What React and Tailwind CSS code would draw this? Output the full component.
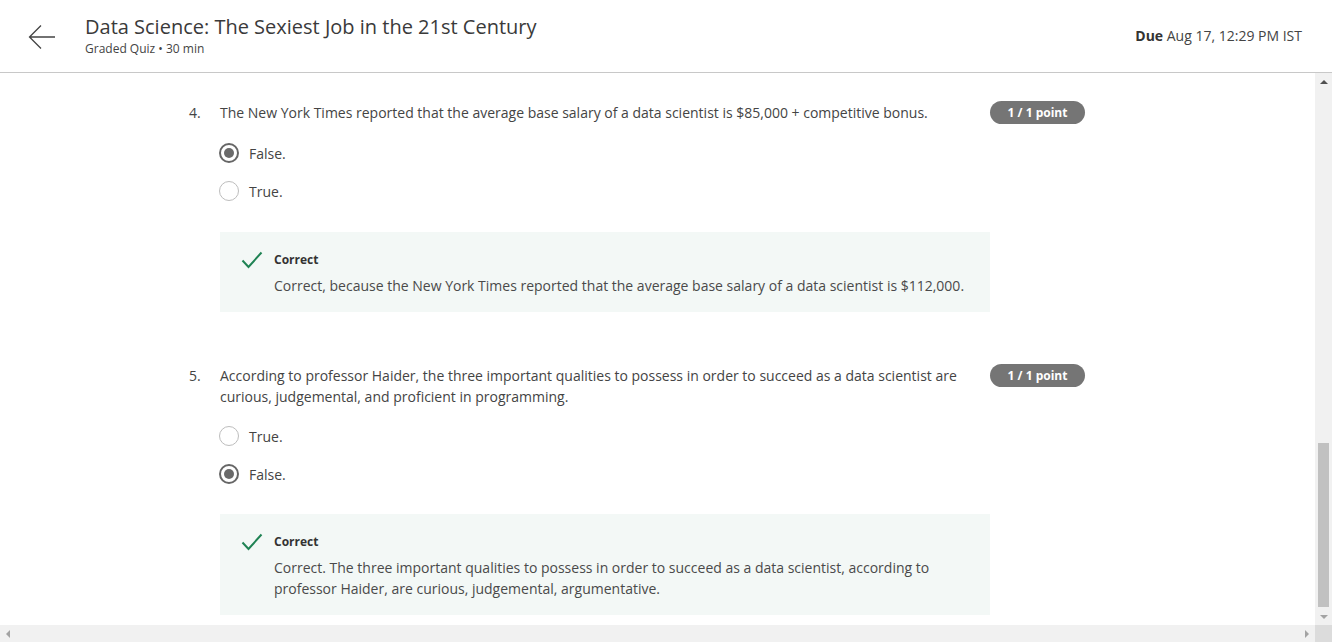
import React from 'react';

const font = "font-['Open_Sans','Liberation_Sans',sans-serif]";

function Radio({ checked }) {
  return checked ? (
    <div className="w-[20px] h-[20px] rounded-full border-2 border-[#666] flex items-center justify-center">
      <div className="w-[10px] h-[10px] rounded-full bg-[#6a6a6a]" />
    </div>
  ) : (
    <div className="w-[20px] h-[20px] rounded-full border-[1.5px] border-[#bdbdbd]" />
  );
}

function Option({ label, checked }) {
  return (
    <div className="h-[38px] flex items-center gap-[10px]">
      <Radio checked={checked} />
      <span className="text-[14px] text-[#444]">{label}</span>
    </div>
  );
}

function Feedback({ children }) {
  return (
    <div className="w-[770px] bg-[#f3f8f6] pl-[21px] pr-6 pt-[19px] pb-[16px] flex gap-[11px]">
      <svg width="22" height="18" viewBox="0 0 22 18" className="shrink-0">
        <path d="M1.5 9.5 L7.5 16 L20.5 1.5" fill="none" stroke="#1f8354" strokeWidth="2" />
      </svg>
      <div className="flex flex-col gap-[6px]">
        <span className="text-[12px] leading-[18px] font-bold text-[#333]">Correct</span>
        <p className="text-[14px] leading-[21px] text-[#4a4a4a]">{children}</p>
      </div>
    </div>
  );
}

function Question({ num, text, options, feedback, tight }) {
  return (
    <div className="flex">
      <div className="w-[31px] text-[14px] leading-[21px] text-[#444]">{num}.</div>
      <div className="flex flex-col">
        <div className="flex items-start">
          <p className="w-[750px] text-[14px] leading-[21px] text-[#444]">{text}</p>
          <span className="ml-[20px] w-[95px] h-[23px] -mt-[1px] rounded-full bg-[#757575] text-white text-[12px] font-bold flex items-center justify-center">
            1 / 1 point
          </span>
        </div>
        <div className="mt-[10px] -ml-[1px]">
          {options.map((o) => (
            <Option key={o.label} label={o.label} checked={o.checked} />
          ))}
        </div>
        <div className={tight ? 'mt-[21px]' : 'mt-[22px]'}>
          <Feedback>{feedback}</Feedback>
        </div>
      </div>
    </div>
  );
}

export default function App() {
  return (
    <div className={`w-[1332px] h-[642px] flex flex-col bg-white overflow-hidden ${font}`}>
      <header className="h-[73px] shrink-0 border-b border-[#c8c8c8] flex items-center pl-[28px] pr-[30px]">
        <svg width="28" height="26" viewBox="0 0 28 26" className="mr-[29px] mt-[2px]">
          <path d="M27 13 H2 M13 1.5 L1.5 13 L13 24.5" fill="none" stroke="#444" strokeWidth="1.3" />
        </svg>
        <div className="flex flex-col -mt-[2px]">
          <h1 className="text-[20px] leading-[26px] text-[#3a3a3a]">Data Science: The Sexiest Job in the 21st Century</h1>
          <span className="text-[12px] leading-[16px] text-[#444] mt-[1px]">Graded Quiz • 30 min</span>
        </div>
        <div className="ml-auto text-[14px] text-[#444] -mt-[1px]">
          <span className="font-bold text-[#333]">Due</span> Aug 17, 12:29 PM IST
        </div>
      </header>
      <div className="flex flex-1 min-h-0">
        <main className="flex-1 overflow-hidden pl-[189px] pt-[29px] flex flex-col gap-[53px]">
          <Question
            num={4}
            text="The New York Times reported that the average base salary of a data scientist is $85,000 + competitive bonus."
            options={[
              { label: 'False.', checked: true },
              { label: 'True.', checked: false },
            ]}
            feedback="Correct, because the New York Times reported that the average base salary of a data scientist is $112,000."
          />
          <Question
            num={5}
            tight
            text="According to professor Haider, the three important qualities to possess in order to succeed as a data scientist are curious, judgemental, and proficient in programming."
            options={[
              { label: 'True.', checked: false },
              { label: 'False.', checked: true },
            ]}
            feedback="Correct. The three important qualities to possess in order to succeed as a data scientist, according to professor Haider, are curious, judgemental, argumentative."
          />
        </main>
        <div className="w-[17px] bg-[#f1f1f1] flex flex-col items-center">
          <div className="h-[17px] flex items-center justify-center">
            <div className="w-0 h-0 border-l-[4px] border-r-[4px] border-b-[4px] border-l-transparent border-r-transparent border-b-[#505050]" />
          </div>
          <div className="flex-1 w-full flex flex-col justify-end pb-[1px]">
            <div className="h-[164px] mx-[3px] bg-[#c1c1c1]" />
          </div>
          <div className="h-[17px] flex items-center justify-center">
            <div className="w-0 h-0 border-l-[4px] border-r-[4px] border-t-[4px] border-l-transparent border-r-transparent border-t-[#a3a3a3]" />
          </div>
        </div>
      </div>
      <div className="h-[17px] shrink-0 flex bg-[#f1f1f1]">
        <div className="flex-1 flex items-center justify-between px-[6px]">
          <div className="w-0 h-0 border-t-[4px] border-b-[4px] border-r-[4px] border-t-transparent border-b-transparent border-r-[#a3a3a3]" />
          <div className="w-0 h-0 border-t-[4px] border-b-[4px] border-l-[4px] border-t-transparent border-b-transparent border-l-[#a3a3a3]" />
        </div>
        <div className="w-[17px] bg-[#dcdcdc]" />
      </div>
    </div>
  );
}
